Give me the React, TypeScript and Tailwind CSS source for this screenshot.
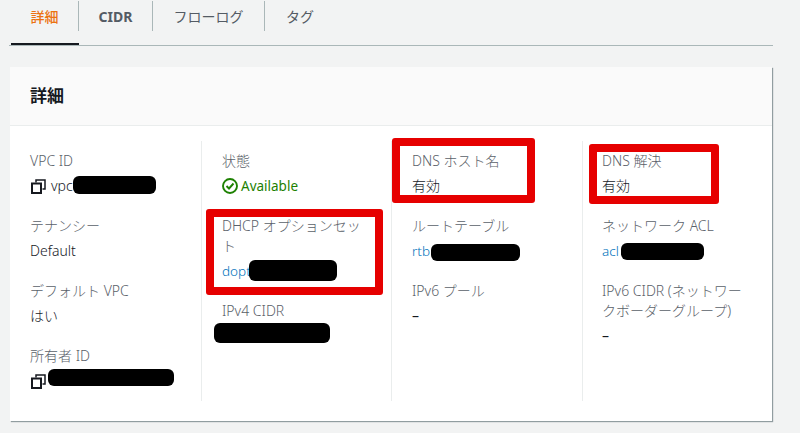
import {ReactNode} from 'react'

const tabs = [
  {label: '詳細', width: 'w-[68px]', weight: 'font-medium', active: true},
  {label: 'CIDR', width: 'w-[74px]', weight: 'font-bold', active: false},
  {label: 'フローログ', width: 'w-[112px]', weight: 'font-normal', active: false},
  {label: 'タグ', width: 'w-[70px]', weight: 'font-normal', active: false},
]

const CopyIcon = () => (
  <svg width="15" height="15" viewBox="0 0 15 15" fill="none" stroke="#16191f" className="shrink-0 ml-px mr-[5px]">
    <path d="M5 3.5V1h9v9h-2.5" strokeWidth="1.5" />
    <rect x="1" y="4.5" width="9" height="9.5" strokeWidth="2" fill="white" />
  </svg>
)

const CheckIcon = () => (
  <svg width="16" height="16" viewBox="0 0 16 16" fill="none" stroke="#1d8102" strokeWidth="1.9" className="shrink-0">
    <circle cx="8" cy="8" r="7" />
    <path d="M4.5 8l2.5 2.5 4.5-5" />
  </svg>
)

const Item = ({label, children}: {label: string; children?: ReactNode}) => (
  <div className="flex flex-col gap-[5px]">
    <div className="text-[#5a6169] font-light leading-[20px] max-w-[148px]">{label}</div>
    <div className="min-h-[20px] leading-[20px] text-[#16191f] flex items-center">{children}</div>
  </div>
)

const Link = ({children}: {children: ReactNode}) => <span className="text-[13.5px] font-light text-[#0073bb]">{children}</span>

const Thin = ({children}: {children: ReactNode}) => <span className="font-light">{children}</span>

const Column = ({children, last}: {children: ReactNode; last?: boolean}) => (
  <div className={`flex flex-col gap-5 pt-[10px] h-[260px] ${last ? 'pl-[19px]' : 'pl-5 border-r border-[#eaeded]'}`}>
    {children}
  </div>
)

const RedBox = ({className}: {className: string}) => (
  <div className={`absolute border-[8px] border-[#e60000] rounded-[3px] ${className}`} />
)

const Redact = ({className}: {className: string}) => (
  <div className={`absolute bg-black rounded-[6px] ${className}`} />
)

export default function App() {
  return (
    <div
      className="relative w-[800px] h-[433px] overflow-hidden bg-[#f2f3f3] text-[14px]"
      style={{fontFamily: '"Noto Sans", "Noto Sans CJK JP", sans-serif'}}
    >
      <div className="ml-[9px] w-[764px] h-[46px] border-b border-[#aab7b8] flex pl-[2px]">
        {tabs.map((tab, i) => (
          <div key={tab.label} className={`${tab.width} h-[45px] relative ${tab.active ? 'border-b-2 border-[#16191f]' : ''}`}>
            <div className={`h-[30px] mt-px flex items-center justify-center ${tab.weight} ${tab.active ? 'text-[#ec7211]' : 'text-[#545b64]'} ${i < 3 ? 'border-r border-[#aab7b8]' : ''}`}>
              {tab.label}
            </div>
          </div>
        ))}
      </div>

      <div className="mt-[21px] ml-[10px] w-[762px] h-[354px] bg-white shadow-[1px_1px_1px_0_rgba(0,28,36,0.4)]">
        <div className="h-[59px] pl-5 flex items-center bg-[#fafafa] border-b border-[#eaeded] text-[17px] font-bold text-[#16191f]">
          詳細
        </div>
        <div className="grid grid-cols-[192px_190px_191px_1fr] pr-5 pt-[15px]">
          <Column>
            <Item label="VPC ID">
              <CopyIcon />
              <Thin>vpc</Thin>
            </Item>
            <Item label="テナンシー">
              <Thin>Default</Thin>
            </Item>
            <Item label="デフォルト VPC">
              <Thin>はい</Thin>
            </Item>
            <Item label="所有者 ID">
              <CopyIcon />
            </Item>
          </Column>
          <Column>
            <Item label="状態">
              <CheckIcon />
              <span className="ml-[3px] text-[13.5px] text-[#1d8102]">Available</span>
            </Item>
            <Item label="DHCP オプションセット">
              <Link>dopt</Link>
            </Item>
            <Item label="IPv4 CIDR" />
          </Column>
          <Column>
            <Item label="DNS ホスト名">
              <Thin>有効</Thin>
            </Item>
            <Item label="ルートテーブル">
              <Link>rtb</Link>
            </Item>
            <Item label="IPv6 プール">–</Item>
          </Column>
          <Column last>
            <Item label="DNS 解決">
              <Thin>有効</Thin>
            </Item>
            <Item label="ネットワーク ACL">
              <Link>acl</Link>
            </Item>
            <Item label="IPv6 CIDR (ネットワークボーダーグループ)">–</Item>
          </Column>
        </div>
      </div>

      <RedBox className="left-[392px] top-[138px] w-[143px] h-[65px]" />
      <RedBox className="left-[589px] top-[144px] w-[130px] h-[60px]" />
      <RedBox className="left-[206px] top-[209px] w-[177px] h-[86px]" />

      <Redact className="left-[73px] top-[176px] w-[83px] h-[18px]" />
      <Redact className="left-[48px] top-[369px] w-[126px] h-[17px]" />
      <Redact className="left-[249px] top-[260px] w-[88px] h-[21px]" />
      <Redact className="left-[214px] top-[323px] w-[116px] h-[20px]" />
      <Redact className="left-[431px] top-[244px] w-[89px] h-[17px]" />
      <Redact className="left-[621px] top-[243px] w-[83px] h-[17px]" />
    </div>
  )
}
